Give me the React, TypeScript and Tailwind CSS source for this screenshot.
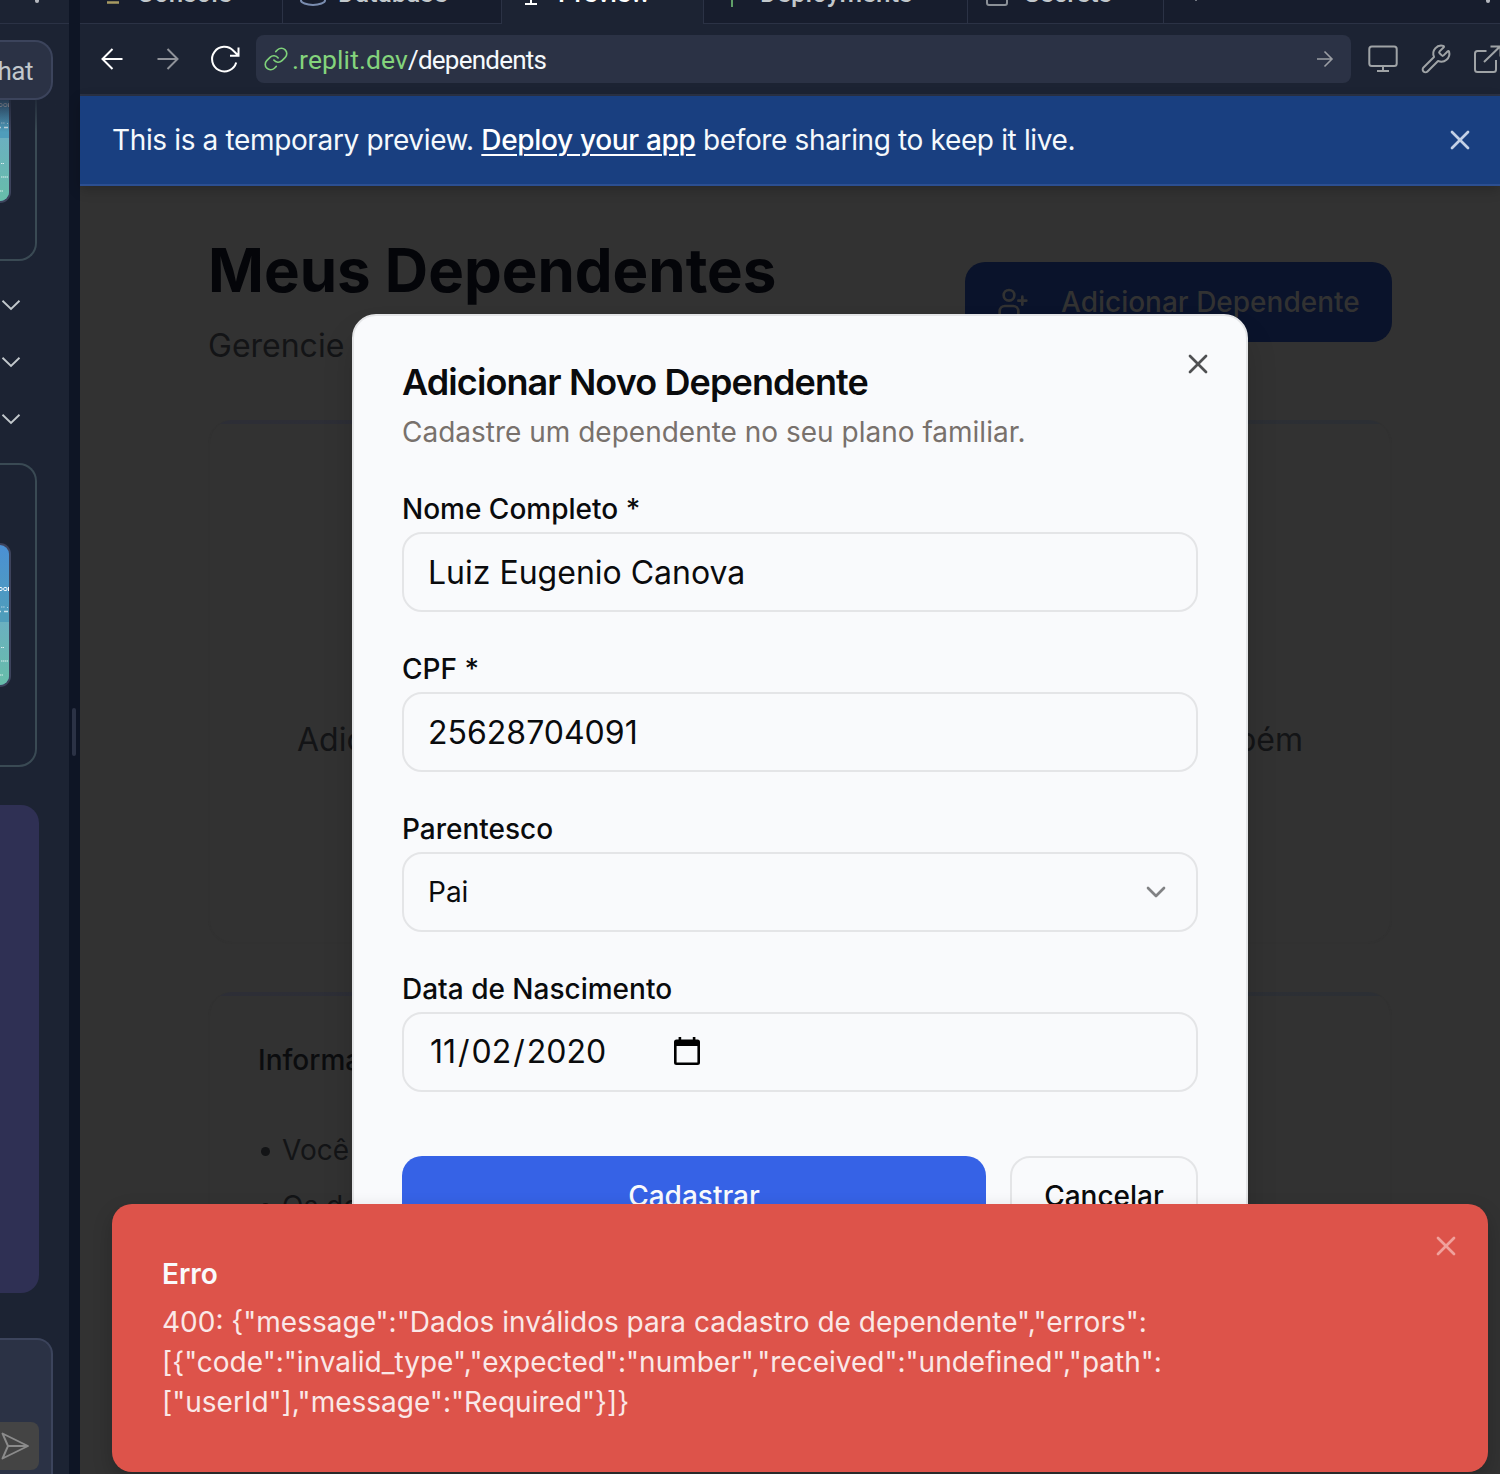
import type { ReactNode } from 'react';
import { ChevronDown, Link, UserPlus, Wrench, X } from 'lucide-react';

function Thumb() {
  return (
    <div className="w-[11px] h-[144px] shrink-0 overflow-hidden rounded-r-[11px] border-2 border-l-0 border-[#3d435c] bg-linear-to-b from-[#4b90d4] via-[#4f9dbb] to-[#4f9dbb]">
      <svg width="9" height="140" viewBox="0 0 9 140" className="block">
        <defs>
          <linearGradient id="sea" x1="0" y1="0" x2="0" y2="1">
            <stop offset="0" stopColor="#6bb0c0" />
            <stop offset="1" stopColor="#67bda9" />
          </linearGradient>
        </defs>
        <rect y="77" width="9" height="63" fill="url(#sea)" />
        <g fill="none" stroke="#fff">
          <rect x="-1.5" y="42.5" width="3.6" height="3" rx="1" strokeWidth="1" />
          <rect x="3.7" y="42.5" width="3.2" height="3" rx="1" strokeWidth="1" />
          <path d="M8.5 42v4" strokeWidth="1" />
          <path d="M1 62h4M7 62.500h1" strokeWidth="1.2" opacity=".55" strokeDasharray="1.5 .6" />
          <path d="M0 66.500h1M4 66.500h4" strokeWidth="1.6" opacity=".7" />
          <path d="M1 102.500h3M1 116h7M0 130h3" strokeWidth="1.2" opacity=".75" strokeDasharray="1.4 .5" />
        </g>
      </svg>
    </div>
  );
}

function SidePanel() {
  return (
    <aside className="relative flex w-[69px] shrink-0 flex-col overflow-hidden bg-[#1c2333]">
      <div className="flex h-6 shrink-0 items-start justify-end border-b border-[#2b3245] pr-[30px]">
        <span className="h-[3px] w-[4px] rounded-b-full bg-[#b5b8bf]" />
      </div>
      <div className="flex h-[237px] w-[37px] shrink-0 flex-col justify-end rounded-br-[18px] border-2 border-l-0 border-t-0 border-[#3a4a54] pb-[56px]">
        <Thumb />
      </div>
      <div className="mt-[15px] flex shrink-0 flex-col">
        {[0, 1, 2].map((i) => (
          <div key={i} className="flex h-[57px] items-center">
            <svg width="22" height="12" viewBox="0 0 22 12" className="block">
              <path d="M2.500 1.800l8.500 8.200 8.500-8.200" fill="none" stroke="#c2c8cc" strokeWidth="1.900" />
            </svg>
          </div>
        ))}
      </div>
      <div className="mt-4 flex h-[304px] w-[37px] shrink-0 flex-col rounded-r-[18px] border-2 border-l-0 border-[#3a4a54] pt-[78px]">
        <Thumb />
      </div>
      <div className="mt-[38px] h-[488px] w-[39px] shrink-0 rounded-r-[18px] bg-[#2f3054]" />
      <div className="mt-[45px] flex h-[160px] w-[53px] shrink-0 flex-col rounded-tr-[16px] border-r-2 border-t-2 border-[#3c445c] bg-[#2b3245] pt-[82px]">
        <div className="flex h-12 w-[39px] items-center rounded-r-lg bg-[#444444]">
          <svg width="32" height="32" viewBox="0 0 32 32" className="block">
            <path d="M2.500 3.500L28 16 2.500 28.500 8 16zM8 16h20" fill="none" stroke="#8b8b8b" strokeWidth="1.900" strokeLinejoin="round" />
          </svg>
        </div>
      </div>
      <div className="absolute left-0 top-6 h-[76px] w-[69px] bg-[#1c2333]" />
      <div className="absolute left-0 top-[100px] h-8 w-[69px] bg-linear-to-b from-[#1c2333cc] to-[#1c233300]" />
      <div className="absolute left-0 top-10 flex h-[60px] w-[53px] items-center justify-end overflow-hidden rounded-r-[18px] border-2 border-l-0 border-[#3c445c] bg-[#2b3245] pr-[18px] pt-[2px]">
        <span className="whitespace-nowrap font-[Roboto] text-[26px] tracking-[-0.5px] text-[#c2c8cc]">Chat</span>
      </div>
    </aside>
  );
}

function Tab({ icon, label, className, active }: { icon: ReactNode; label: string; className: string; active?: boolean }) {
  return (
    <div
      className={`flex shrink-0 items-center border-[#2b3245] ${
        active ? 'mb-[-1px] h-[61px] bg-[#1c2333] pb-px text-white' : 'h-[60px] bg-[#171d2d] text-[#c2c8cc]'
      } ${className}`}
    >
      <span className="mt-[2px] flex w-8 shrink-0 justify-center">{icon}</span>
      <span className="ml-2 whitespace-nowrap font-[Roboto] text-[26px] font-medium leading-[40px]">{label}</span>
    </div>
  );
}

function TabBar() {
  return (
    <div className="flex h-6 shrink-0 items-end border-b border-[#2b3245] bg-[#171d2d]">
      <Tab
        className="w-[203px] border-r pl-[17px]"
        label="Console"
        icon={<svg width="28" height="28" viewBox="0 0 28 28"><path d="M6 5l6 6-6 6M8 22.500h12" fill="none" stroke="#a89a62" strokeWidth="2.500" /></svg>}
      />
      <Tab
        className="w-[219px] border-r pl-[15px]"
        label="Database"
        icon={
          <svg width="28" height="28" viewBox="0 0 28 28" fill="none" stroke="#7a8db0" strokeWidth="2">
            <ellipse cx="12" cy="5" rx="12" ry="4" />
            <path d="M1 5v15.500c0 2.200 5.400 4.400 12 4.400s12-2.200 12-4.400V5" />
          </svg>
        }
      />
      <Tab
        active
        className="w-[201px] pl-[16px]"
        label="Preview"
        icon={<svg width="28" height="28" viewBox="0 0 28 28" fill="none" stroke="#fff" strokeWidth="2"><rect x="-1" y="3" width="26" height="15" rx="2" /><path d="M11 18v6M5 24h12" /></svg>}
      />
      <Tab
        className="w-[265px] border-x pl-[16px]"
        label="Deployments"
        icon={<svg width="28" height="28" viewBox="0 0 28 28" fill="none" stroke="#5f9f68" strokeWidth="2"><path d="M10 2v25M3 11l7-9 7 9" /></svg>}
      />
      <Tab
        className="w-[196px] border-r pl-[16px]"
        label="Secrets"
        icon={<svg width="28" height="28" viewBox="0 0 28 28" fill="none" stroke="#8b9097" strokeWidth="2"><rect x="1" y="9" width="20" height="16" rx="2" /><path d="M5 9V7a6 6 0 0 1 12 0v2" /></svg>}
      />
      <div className="flex flex-1 items-start justify-between self-stretch pl-[31px] pr-[10px]">
        <span className="h-px w-[2px] bg-[#70757f]" />
        <span className="h-[3px] w-[4px] rounded-b-full bg-[#b5b8bf]" />
      </div>
    </div>
  );
}

function Toolbar() {
  return (
    <div className="flex h-[72px] shrink-0 items-center overflow-hidden border-b-2 border-[#2b3245] bg-[#1c2333] pl-[20px]">
      <svg width="24" height="24" viewBox="0 0 24 24" className="shrink-0" fill="none" stroke="#fff" strokeWidth="2">
        <path d="M22.500 12H2.500M12.500 2L2.500 12l10 10" />
      </svg>
      <svg width="24" height="24" viewBox="0 0 24 24" className="ml-[32px] shrink-0" fill="none" stroke="#8f9299" strokeWidth="2">
        <path d="M1.500 12h20M11.500 2l10 10-10 10" />
      </svg>
      <svg width="32" height="32" viewBox="0 0 32 32" className="ml-[29px] shrink-0" fill="none" stroke="#fff" strokeWidth="2">
        <path d="M27.200 19.500a12.300 12.300 0 1 1-2.800-11.700l4.600 4.500M29.500 4.500v8.300H21" />
      </svg>
      <div className="ml-[15px] flex h-12 w-[1095px] shrink-0 items-center rounded-lg bg-[#2b3245] pl-[7px] pr-[17px]">
        <Link size={26} strokeWidth={1.5} color="#7fd17a" />
        <span className="ml-[3px] mt-[2px] whitespace-nowrap font-[Roboto] text-[26.500px] leading-[40px] tracking-[0.1px] text-[#84d47c]">.replit.dev</span>
        <span className="mt-[2px] whitespace-nowrap font-[Roboto] text-[26px] leading-[40px] tracking-[-0.76px] text-[#f5f9fc]">/dependents</span>
        <svg width="18" height="18" viewBox="0 0 18 18" className="ml-auto shrink-0" fill="none" stroke="#9b9ea4" strokeWidth="1.600">
          <path d="M1 9h15M8.500 1.500L16 9l-7.500 7.500" />
        </svg>
      </div>
      <svg width="32" height="32" viewBox="0 0 32 32" className="ml-[16px] shrink-0" fill="none" stroke="#9fa3a6" strokeWidth="2">
        <rect x="2.300" y="3.500" width="27.400" height="19.500" rx="2.500" />
        <path d="M16 23v5M10 28h12" />
      </svg>
      <Wrench size={32} strokeWidth={1.5} color="#9fa3a6" className="ml-[21px] shrink-0" />
      <svg width="32" height="32" viewBox="0 0 32 32" className="ml-[20px] shrink-0" fill="none" stroke="#9fa3a6" strokeWidth="2">
        <path d="M14.500 8H5.500A2.500 2.500 0 0 0 3 10.500v16A2.500 2.500 0 0 0 5.500 29h16a2.500 2.500 0 0 0 2.500-2.500V17M12 19L28 3.500M18.500 3.500H28.500V13.500" />
      </svg>
    </div>
  );
}

function Banner() {
  return (
    <div className="relative flex h-[90px] shrink-0 items-center border-b-2 border-[#2c4f91] bg-[#193f80] pl-8 pr-6 text-[28px] leading-[40px] tracking-[-0.36px] text-[#f5f9fc] shadow-[0_4px_12px_rgba(0,0,0,0.2)]">
      <p className="whitespace-nowrap">
        This is a temporary preview.{' '}
        <a className="font-medium tracking-[-0.33px] underline decoration-2 underline-offset-[4px] text-white">Deploy your app</a> before sharing to keep it live.
      </p>
      <X size={32} strokeWidth={2} color="#c3d0e6" className="ml-auto" />
    </div>
  );
}

function PageCard({ className, children }: { className: string; children: ReactNode }) {
  return (
    <section className={`relative overflow-hidden rounded-[24px] border-2 border-t-0 border-[#313131] bg-[#323232] ${className}`}>
      <div className="h-[4px] bg-linear-to-r from-[#2d2e36] to-[#2c2f34]" />
      {children}
    </section>
  );
}

function DependentsPage() {
  return (
    <main className="flex flex-1 flex-col overflow-hidden bg-[#323232] pl-32 pr-[108px]">
      <header className="flex items-start justify-between pt-[48px]">
        <div>
          <h1 className="text-[60px] font-bold leading-[72px] text-[#040509]">Meus Dependentes</h1>
          <p className="mt-[16px] text-[32px] leading-[48px] text-[#131416]">Gerencie</p>
        </div>
        <button className="mt-[28px] flex h-20 w-[427px] items-center rounded-[20px] bg-[#0a132b] pl-8 text-[28px] font-medium text-[#323232]">
          <UserPlus size={32} strokeWidth={2} />
          <span className="ml-[32px]">Adicionar Dependente</span>
        </button>
      </header>
      <PageCard className="mt-[50px] h-[524px] shrink-0">
        <div className="flex justify-between px-[87px] pt-[292px] text-[32px] leading-[48px] text-[#131416]">
          <span>Adicione</span>
          <span>também</span>
        </div>
      </PageCard>
      <PageCard className="mt-[48px] h-[600px] shrink-0">
        <div className="px-12 pt-[44px] text-[28px] leading-[40px]">
          <h2 className="font-medium text-[#0b0c0e]">Informações</h2>
          <ul className="mt-[50px] flex flex-col gap-4 text-[#131416]">
            {['Você', 'Os dependentes'].map((t) => (
              <li key={t} className="flex items-center gap-[12px] pl-[3px]">
                <span className="mt-[3px] size-[9px] rounded-full bg-[#131416]" />
                {t}
              </li>
            ))}
          </ul>
        </div>
      </PageCard>
    </main>
  );
}

function Field({ label, children }: { label: string; children: ReactNode }) {
  return (
    <div className="flex flex-col">
      <label className="h-12 text-[28px] font-medium leading-[50px]">{label}</label>
      <div className="flex h-20 items-center rounded-[20px] border-2 border-[#e4e5e7] px-6 text-[32px]">{children}</div>
    </div>
  );
}

function AddDependentDialog() {
  return (
    <div className="absolute left-[352px] top-[314px] flex h-[972px] w-[896px] flex-col rounded-[24px] border-2 border-[#e4e5e7] bg-[#f9fafc] p-12 text-[#0a0b0d] shadow-[0_20px_30px_rgba(0,0,0,0.15)]">
      <X size={32} strokeWidth={2} color="#4f5052" className="absolute right-[32px] top-[32px]" />
      <h2 className="text-[36px] font-semibold leading-[36px] tracking-[-0.025em]">Adicionar Novo Dependente</h2>
      <p className="mt-3 text-[28px] leading-[40px] text-[#78716c]">Cadastre um dependente no seu plano familiar.</p>
      <form className="mt-8 flex flex-col gap-8">
        <Field label="Nome Completo *"><span className="pt-[2px]">Luiz Eugenio Canova</span></Field>
        <Field label="CPF *"><span className="pt-[2px]">25628704091</span></Field>
        <Field label="Parentesco">
          <span className="text-[28px]">Pai</span>
          <ChevronDown size={32} strokeWidth={2} color="#818284" className="ml-auto" />
        </Field>
        <Field label="Data de Nascimento">
          <span className="px-[2px]">11</span>/<span className="px-[2px]">02</span>/<span className="px-[2px]">2020</span>
          <svg width="26" height="28" viewBox="0 0 26 28" className="mb-[2px] ml-[66px] block">
            <path fillRule="evenodd" d="M4.600 0h2.600v2.500h11.600V0h2.600v2.500H23.500A2.500 2.500 0 0 1 26 5v20.500a2.500 2.500 0 0 1-2.500 2.500h-21A2.500 2.500 0 0 1 0 25.500V5a2.500 2.500 0 0 1 2.500-2.500H4.600zM2.600 9v16.400h20.800V9z" />
          </svg>
        </Field>
        <div className="mt-8 flex gap-6 text-[28px] font-medium">
          <button className="h-20 flex-1 rounded-[20px] bg-[#3662e6] text-[#f9fafc]">Cadastrar</button>
          <button className="h-20 w-[188px] rounded-[20px] border-2 border-[#e4e5e7]">Cancelar</button>
        </div>
      </form>
    </div>
  );
}

function ErrorToast() {
  return (
    <div className="absolute left-[112px] top-[1204px] flex h-[268px] w-[1376px] flex-col rounded-[20px] bg-[#dd534a] p-[50px] text-[28px] leading-[40px] text-[#f9fafc] shadow-[0_8px_20px_rgba(0,0,0,0.2)]">
      <X size={32} strokeWidth={2} color="#f0a19c" className="absolute right-[26px] top-[26px]" />
      <p className="font-semibold">Erro</p>
      <p className="mt-2 text-[#fae8e7]">
        {'400: {"message":"Dados inválidos para cadastro de dependente","errors":'}
        <br />
        {'[{"code":"invalid_type","expected":"number","received":"undefined","path":'}
        <br />
        {'["userId"],"message":"Required"}]}'}
      </p>
    </div>
  );
}

export default function App() {
  return (
    <div className="relative flex h-[1474px] w-[1500px] overflow-hidden bg-[#0e1525] font-[Inter,sans-serif]">
      <SidePanel />
      <div className="flex w-[11px] shrink-0 flex-col items-center pt-[708px]">
        <div className="ml-[-1px] h-12 w-1 rounded-full bg-[#2b3245]" />
      </div>
      <div className="flex min-w-0 flex-1 flex-col">
        <TabBar />
        <Toolbar />
        <Banner />
        <DependentsPage />
      </div>
      <AddDependentDialog />
      <ErrorToast />
    </div>
  );
}
